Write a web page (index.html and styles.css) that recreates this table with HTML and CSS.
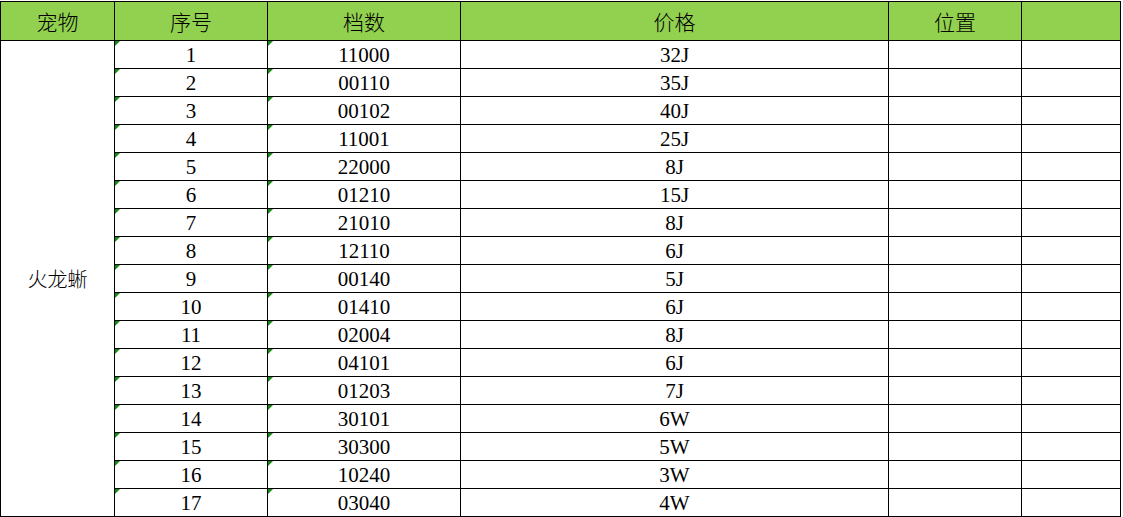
FILE: index.html
```html
<!DOCTYPE html>
<html lang="zh">
<head>
<meta charset="utf-8">
<title>宠物价格表</title>
<link rel="stylesheet" href="styles.css">
</head>
<body>
<table class="sheet">
  <colgroup>
    <col class="c-pet">
    <col class="c-no">
    <col class="c-code">
    <col class="c-price">
    <col class="c-pos">
    <col class="c-extra">
  </colgroup>
  <thead>
    <tr class="head">
      <th>宠物</th><th>序号</th><th>档数</th><th>价格</th><th>位置</th><th></th>
    </tr>
  </thead>
  <tbody>
    <tr><td class="pet" rowspan="17">火龙蜥</td><td class="txt">1</td><td class="txt">11000</td><td>32J</td><td></td><td></td></tr>
    <tr><td class="txt">2</td><td class="txt">00110</td><td>35J</td><td></td><td></td></tr>
    <tr><td class="txt">3</td><td class="txt">00102</td><td>40J</td><td></td><td></td></tr>
    <tr><td class="txt">4</td><td class="txt">11001</td><td>25J</td><td></td><td></td></tr>
    <tr><td class="txt">5</td><td class="txt">22000</td><td>8J</td><td></td><td></td></tr>
    <tr><td class="txt">6</td><td class="txt">01210</td><td>15J</td><td></td><td></td></tr>
    <tr><td class="txt">7</td><td class="txt">21010</td><td>8J</td><td></td><td></td></tr>
    <tr><td class="txt">8</td><td class="txt">12110</td><td>6J</td><td></td><td></td></tr>
    <tr><td class="txt">9</td><td class="txt">00140</td><td>5J</td><td></td><td></td></tr>
    <tr><td class="txt">10</td><td class="txt">01410</td><td>6J</td><td></td><td></td></tr>
    <tr><td class="txt">11</td><td class="txt">02004</td><td>8J</td><td></td><td></td></tr>
    <tr><td class="txt">12</td><td class="txt">04101</td><td>6J</td><td></td><td></td></tr>
    <tr><td class="txt">13</td><td class="txt">01203</td><td>7J</td><td></td><td></td></tr>
    <tr><td class="txt">14</td><td class="txt">30101</td><td>6W</td><td></td><td></td></tr>
    <tr><td class="txt">15</td><td class="txt">30300</td><td>5W</td><td></td><td></td></tr>
    <tr><td class="txt">16</td><td class="txt">10240</td><td>3W</td><td></td><td></td></tr>
    <tr><td class="txt">17</td><td class="txt">03040</td><td>4W</td><td></td><td></td></tr>
  </tbody>
</table>
</body>
</html>
```

FILE: styles.css
```css
html, body {
  margin: 0;
  padding: 0;
  background: #ffffff;
}

body {
  padding-top: 1px;
  font-family: "Liberation Serif", "Noto Sans CJK SC", serif;
  color: #000000;
}

.sheet {
  border-collapse: collapse;
  table-layout: fixed;
  width: 1121px;
}

.c-pet { width: 114px; }
.c-no { width: 153px; }
.c-code { width: 193px; }
.c-price { width: 428px; }
.c-pos { width: 133px; }
.c-extra { width: 99px; }

.sheet th,
.sheet td {
  border: 1px solid #000000;
  padding: 0;
  text-align: center;
  white-space: nowrap;
  overflow: hidden;
}

.head th {
  height: 38px;
  background: #92d050;
  font-family: "Noto Sans CJK SC", sans-serif;
  font-weight: 300;
  font-size: 21px;
  line-height: 38px;
}

.sheet td {
  height: 25px;
  padding-top: 2px;
  font-size: 21px;
  line-height: 25px;
}

.sheet td.pet {
  padding-top: 0;
  font-family: "Noto Sans CJK SC", sans-serif;
  font-weight: 300;
  font-size: 20px;
  line-height: 24px;
}

.sheet td.txt {
  position: relative;
}

.sheet td.txt::before {
  content: "";
  position: absolute;
  left: 0;
  top: 0;
  width: 0;
  height: 0;
  border-top: 5px solid #108a10;
  border-right: 5px solid transparent;
}
```
